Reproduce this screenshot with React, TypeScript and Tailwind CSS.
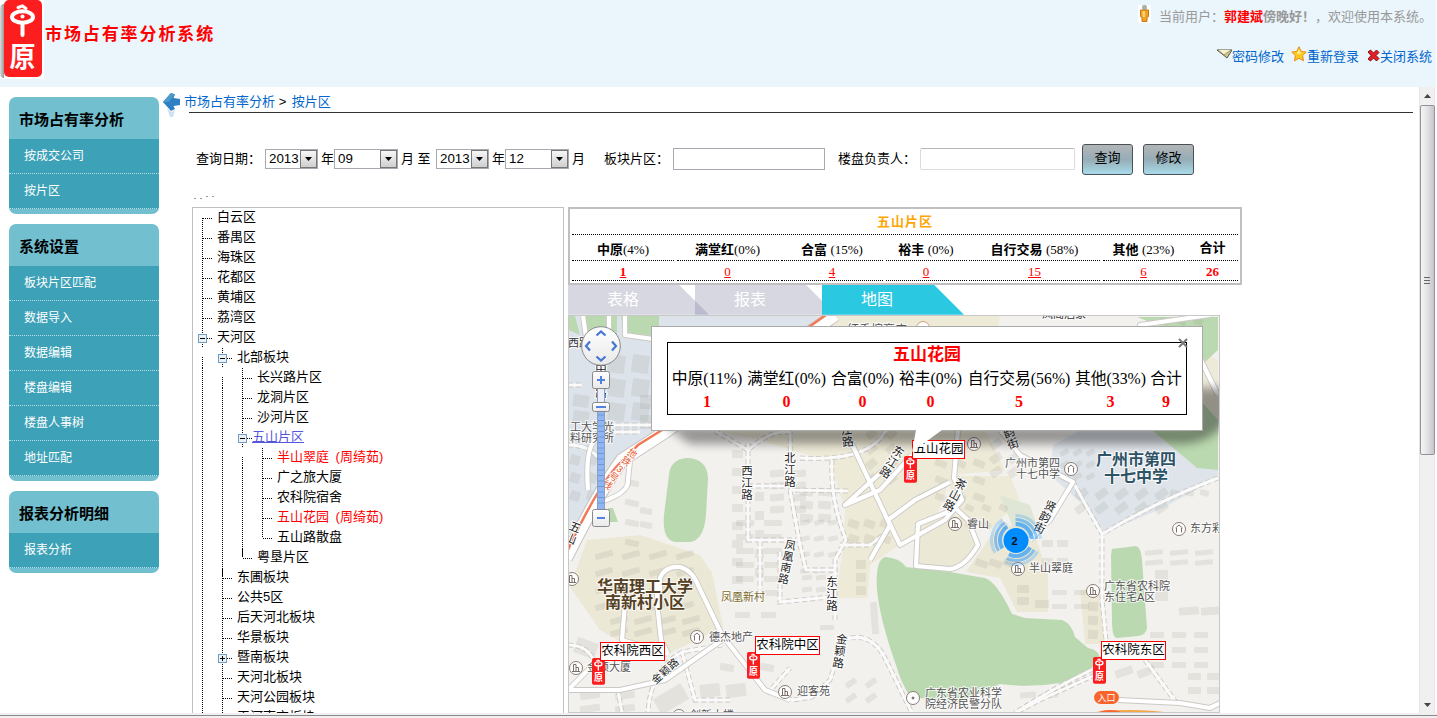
import React from 'react';

const menus = [
  { title: '市场占有率分析', items: ['按成交公司', '按片区'] },
  { title: '系统设置', items: ['板块片区匹配', '数据导入', '数据编辑', '楼盘编辑', '楼盘人事树', '地址匹配'] },
  { title: '报表分析明细', items: ['报表分析'] },
];

type Node = { t: string; l: number; box?: '-' | '+'; through?: number[]; gap?: number; top?: boolean; last?: boolean; solid?: boolean; kind?: 'red' | 'sel' };

const tree: Node[] = [
  { t: '白云区', l: 0, top: true },
  { t: '番禺区', l: 0 },
  { t: '海珠区', l: 0 },
  { t: '花都区', l: 0 },
  { t: '黄埔区', l: 0 },
  { t: '荔湾区', l: 0 },
  { t: '天河区', l: 0, box: '-' },
  { t: '北部板块', l: 1, box: '-', through: [0], gap: 0 },
  { t: '长兴路片区', l: 2, through: [0, 1], gap: 1 },
  { t: '龙洞片区', l: 2, through: [0, 1] },
  { t: '沙河片区', l: 2, through: [0, 1] },
  { t: '五山片区', l: 2, through: [0, 1], box: '-', kind: 'sel' },
  { t: '半山翠庭 (周绮茹)', l: 3, through: [0, 1, 2], gap: 2, kind: 'red' },
  { t: '广之旅大厦', l: 3, through: [0, 1, 2] },
  { t: '农科院宿舍', l: 3, through: [0, 1, 2] },
  { t: '五山花园 (周绮茹)', l: 3, through: [0, 1, 2], kind: 'red' },
  { t: '五山路散盘', l: 3, through: [0, 1, 2], last: true },
  { t: '粤垦片区', l: 2, through: [0, 1], last: true, solid: true },
  { t: '东圃板块', l: 1, through: [0], solid: true },
  { t: '公共5区', l: 1, through: [0] },
  { t: '后天河北板块', l: 1, through: [0] },
  { t: '华景板块', l: 1, through: [0] },
  { t: '暨南板块', l: 1, through: [0], box: '+' },
  { t: '天河北板块', l: 1, through: [0] },
  { t: '天河公园板块', l: 1, through: [0] },
  { t: '天河南方板块', l: 1, through: [0] },
];

function Gutter({ n }: { n: Node }) {
  const x = 9.5 + n.l * 20;
  const w = n.kind === 'sel' ? 59 : 24 + n.l * 20;
  const d = { stroke: '#000', strokeWidth: 1, strokeDasharray: '1 1' };
  return (
    <svg width={w} height="20" className="block shrink-0" shapeRendering="crispEdges">
      {(n.through || []).map((k) => (
        <line key={k} x1={9.5 + k * 20} x2={9.5 + k * 20} y1={n.gap === k ? 9 : 0} y2="20" {...d} />
      ))}
      <line x1={x} x2={x} y1={n.top ? 10 : 0} y2={n.last ? 10 : 20} {...d} />
      {n.solid && <line x1={x} x2={x} y1="0" y2="9" stroke="#000" />}
      <line x1={x} x2={x + 9} y1="10.5" y2="10.5" {...d} />
      {n.box && (
        <g>
          <rect x={x - 4} y="6.5" width="8" height="8" rx="1" fill="#eef1f4" stroke="#6f9cc4" />
          <line x1={x - 2.5} x2={x + 2.5} y1="10.5" y2="10.5" stroke="#000" />
          {n.box === '+' && <line x1={x} x2={x} y1="8" y2="13" stroke="#000" />}
        </g>
      )}
    </svg>
  );
}

function Seal({ className }: { className: string }) {
  return (
    <svg viewBox="0 0 38 78" preserveAspectRatio="none" className={className}>
      <rect x="0" y="0" width="38" height="77" rx="5" fill="#fc1d1f" />
      <ellipse cx="18.500" cy="17" rx="10.500" ry="5.800" fill="none" stroke="#fff" strokeWidth="4" />
      <path d="M14 7.500L18.500 6L22 8.500" fill="none" stroke="#fff" strokeWidth="3" strokeLinecap="round" />
      <path d="M18.500 23v12" stroke="#fff" strokeWidth="4" strokeLinecap="round" />
      <circle cx="18.500" cy="16.500" r="2" fill="#fff" />
      <text x="18.500" y="67" textAnchor="middle" fontSize="28" fontWeight="700" fill="#fff" textLength="26" lengthAdjust="spacingAndGlyphs">原</text>
    </svg>
  );
}

function Select({ v, w }: { v: string; w: string }) {
  return (
    <div className={`flex h-5 items-center justify-between border border-[#a9a9b2] bg-white pl-[3px] text-[13.333px] ${w}`}>
      <span className="leading-[18px]">{v}</span>
      <span className="flex h-[18px] w-[17px] shrink-0 items-center justify-center border border-[#777] bg-gradient-to-b from-[#f7f7f7] to-[#cfcfcf]">
        <svg width="7" height="4"><path d="M0 0h7L3.500 4z" fill="#000" /></svg>
      </span>
    </div>
  );
}

function ActionButton({ children }: { children: React.ReactNode }) {
  return (
    <button className="mt-[1px] h-[31px] w-[51px] rounded-[3px] border border-[#4b5257] bg-gradient-to-b from-[#b3b5b7] via-[#95adb6] to-[#a9dbea] pb-[3px] text-[13px]">
      {children}
    </button>
  );
}

const columns = [
  { w: 'w-[102px]', n: '中原', p: '(4%)', v: '1' },
  { w: 'w-[102px]', n: '满堂红', p: '(0%)', v: '0' },
  { w: 'w-[102px]', n: '合富', p: ' (15%)', v: '4' },
  { w: 'w-[81px]', n: '裕丰', p: ' (0%)', v: '0' },
  { w: 'w-[131px]', n: '自行交易', p: ' (58%)', v: '15' },
  { w: 'w-[82px]', n: '其他', p: ' (23%)', v: '6' },
  { w: 'w-[51px]', n: '合计', p: '', v: '26' },
];

function Summary() {
  return (
    <div className="flex h-[78px] w-[674px] flex-col border-2 border-[#c0c0c0] px-[2px] font-['Liberation_Serif','Noto_Sans_CJK_SC',serif] text-[13px]">
      <div className="flex h-[26px] items-center justify-center border-b border-dotted border-black text-[13px] font-bold tracking-[1px] text-[#ffa500]">五山片区</div>
      <div className="flex justify-between">
        {columns.map((c) => (
          <div key={c.n} className={`${c.w} text-center`}>
            <div className={`h-[26px] border-b border-dotted border-black whitespace-pre ${c.p ? 'leading-[30px]' : 'leading-[25px]'}`}>
              <b>{c.n}</b>{c.p}
            </div>
            <div className="h-5 border-b border-dotted border-black leading-[21px] text-[#f00]">
              <span className={c.v === '26' ? 'font-bold' : c.v === '1' ? 'font-bold underline' : 'underline'}>{c.v}</span>
            </div>
          </div>
        ))}
      </div>
    </div>
  );
}

function Tabs() {
  return (
    <div className="flex h-[30px] text-[16px] leading-[29px] text-white">
      <div className="w-[141px] bg-[#d7d7e1] pl-[39px] [clip-path:polygon(0_0,111px_0,141px_30px,0_30px)]">表格</div>
      <div className="relative -ml-[14px] w-[141px] bg-[#d7d7e1] pl-[39px] [clip-path:polygon(0_0,111px_0,141px_30px,0_30px)]">
        <span className="absolute bottom-0 left-0 h-[14px] w-[14px] bg-[#bbbbd0] [clip-path:polygon(0_0,100%_100%,0_100%)]" />
        报表
      </div>
      <div className="relative -ml-[14px] w-[142px] bg-[#2bc8e2] pl-[39px] [clip-path:polygon(0_0,112px_0,142px_30px,0_30px)]">地图</div>
    </div>
  );
}

// Blocks of buildings: x, y, columns, rows, step x, step y, width, height, rotation
const blocks: number[][] = [
  [732, 450, 1, 8, 0, 18, 11, 8, 2], [755, 492, 1, 5, 0, 19, 9, 9, 2], [770, 470, 2, 4, 22, 12, 14, 7, -4],
  [800, 488, 2, 3, 18, 13, 13, 8, 5], [736, 520, 2, 6, 28, 14, 18, 6, 0], [800, 520, 3, 4, 14, 16, 10, 5, -12],
  [802, 575, 2, 2, 14, 12, 10, 5, -8], [735, 612, 2, 1, 26, 10, 15, 6, 0],
  [608, 355, 2, 3, 24, 24, 17, 18, 8], [640, 395, 1, 2, 0, 20, 12, 14, 0],
  [570, 455, 2, 3, 17, 18, 10, 10, 18], [573, 395, 1, 2, 0, 16, 16, 12, 8],
  [625, 480, 1, 4, 0, 20, 14, 6, 12], [640, 508, 1, 2, 0, 14, 12, 6, 12],
  [595, 552, 4, 4, 27, 17, 18, 6, -15], [610, 617, 4, 2, 24, 12, 18, 6, -15],
  [848, 520, 3, 2, 16, 15, 11, 8, 18], [856, 560, 1, 3, 0, 13, 10, 9, 0],
  [866, 430, 2, 4, 20, 15, 11, 8, -40], [935, 460, 3, 3, 19, 17, 12, 7, 20],
  [990, 440, 2, 3, 18, 14, 12, 8, -35], [1060, 450, 3, 3, 13, 12, 9, 5, -30], [1075, 490, 5, 2, 20, 14, 13, 8, -35],
  [965, 505, 3, 2, 17, 17, 9, 6, 25], [1042, 540, 2, 2, 15, 18, 11, 7, 0], [1052, 590, 2, 2, 22, 14, 15, 5, 0], [975, 560, 3, 1, 14, 10, 13, 7, 20],
  [1017, 585, 1, 2, 22, 12, 12, 8, 0], [1035, 600, 1, 1, 0, 0, 14, 8, 0], [1088, 602, 1, 3, 0, 14, 10, 9, 3], [1145, 550, 3, 2, 25, 10, 18, 5, -5],
  [1155, 570, 1, 2, 0, 17, 13, 14, 0], [1179, 607, 2, 1, 22, 10, 20, 8, -4], [1150, 632, 3, 3, 22, 15, 14, 6, 0],
  [1115, 668, 2, 1, 22, 0, 18, 8, -20], [1188, 673, 2, 2, 19, 14, 13, 7, 0],
  [575, 640, 1, 1, 0, 0, 22, 16, 20], [580, 692, 2, 2, 35, 13, 20, 7, -8], [655, 690, 1, 1, 0, 0, 32, 18, -30],
  [700, 684, 2, 1, 26, 0, 20, 13, -6], [720, 664, 2, 1, 40, 0, 14, 7, 10], [845, 680, 2, 2, 20, 15, 12, 6, -35],
  [871, 602, 1, 1, 0, 0, 7, 32, -4], [820, 625, 1, 1, 0, 0, 14, 5, 0], [1020, 692, 2, 1, 22, 0, 16, 6, -5],
  [1170, 490, 3, 1, 15, 17, 9, 6, 15], [1160, 318, 3, 6, 17, 17, 9, 7, 20],
];

const minorRoads = [
  'M748 443V540H800', 'M790 430L791 490L848 491', 'M715 431L748 450Q770 430 790 432', 'M748 486H791',
  'M790 490L800 545L806 570H835', 'M760 541V592M780 552V602L830 597', 'M832 460Q830 500 846 540L835 560V620',
  'M800 458Q870 462 886 430', 'M1218 478Q1160 500 1102 534', 'M1073 482L1102 534V600L1107 650L1095 668Q1050 690 1015 713',
  'M1145 660L1178 705', 'M1095 675L1040 700L1015 713', 'M843 640Q870 630 885 658L912 713', 'M843 640L830 680L812 697L793 700L765 690',
  'M722 645L682 652Q650 670 648 713', 'M682 652L695 700H730', 'M568 445Q590 445 600 460', 'M568 385H582M600 425H660M600 432H640', 'M568 645Q590 645 595 665',
  'M840 545H870L890 530', 'M618 690L622 713', 'M767 694L790 668',
];
const majorRoads = [
  'M568 690L620 690L665 680L722 640', 'M568 690L590 668',
  'M625 603L622 640L668 654M657 580V603L661 640L668 654',
  'M660 590V578Q665 566 680 567Q692 570 698 585L722 635L765 690L790 700',
  'M958 430L954 478L962 500L945 520L900 545L888 520L915 500L950 482',
  'M1000 430L1020 455L1073 482L1050 520L1030 540', 'M948 512L918 524L916 566L950 569Q965 567 978 545L968 520L952 505',
  'M1118 700L1180 703L1210 708L1220 703', 'M850 440L890 525L870 560', 'M900 455L845 505L880 490L912 455', 'M1218 395L1197 352L1140 325L1210 315',
  'M595 440Q585 450 588 490M590 505Q630 495 628 480L630 460', 'M609 316V345M625 316V335L660 340', 'M583 316L588 350',
];

function Rotated({ x, y, r, s, size = 11.5, fill = '#222', vertical = true }: { x: number; y: number; r: number; s: string; size?: number; fill?: string; vertical?: boolean }) {
  return (
    <g transform={`translate(${x} ${y}) rotate(${r})`}>
      {s.split('').map((c, i) => (
        <text key={i} x={vertical ? 0 : (i - (s.length - 1) / 2) * (size + 0.5)} y={(vertical ? (i - (s.length - 1) / 2) * (size + 0.5) : 0) + size * 0.36}
          textAnchor="middle" fontSize={size} fill={fill} stroke="#fff" strokeWidth="2" paintOrder="stroke">{c}</text>
      ))}
    </g>
  );
}

const pois: [number, number, string][] = [
  [572, 579, 'b'], [576, 668, 'b'], [697, 637, 'h'], [785, 692, 'b'], [974, 444, 'b'], [1071, 469, 'h'], [955, 524, 'b'],
  [1018, 569, 'b'], [1093, 591, 'b'], [1179, 529, 'h'], [913, 698, 'd'], [923, 328, 'o'], [679, 716, 'b'],
];

const labels: [number, number, string, number, string, boolean?][] = [
  [570, 431, '工大学光', 11, '#555'], [570, 442, '料研究所', 11, '#555'], [568, 347, '西路', 11, '#333'],
  [597, 592, '华南理工大学', 16, '#554124', true], [605, 608, '南新村小区', 16, '#554124', true],
  [721, 601, '凤凰新村', 11, '#7a6a2a'], [709, 641, '德杰地产', 11, '#555'], [587, 671, '金颖大厦', 11, '#555'],
  [797, 695, '迎客苑', 11, '#555'], [690, 719, '创新大楼', 11, '#555'], [1005, 467, '广州市第四', 11, '#555'],
  [1016, 478, '十七中学', 11, '#555'], [1096, 465, '广州市第四', 16, '#2f5366', true], [1104, 482, '十七中学', 16, '#2f5366', true],
  [967, 528, '睿山', 11, '#555'], [1190, 532, '东方彩', 11, '#555'], [1029, 572, '半山翠庭', 11, '#555'],
  [1104, 590, '广东省农科院', 11, '#555'], [1104, 601, '东住宅A区', 11, '#555'],
  [925, 697, '广东省农业科学', 11, '#555'], [925, 708, '院经济民警分队', 11, '#555'],
  [847, 334, '红香槟商店', 12, '#555'], [1042, 318, '凤阁酒家', 11, '#333'],
];

function MapCanvas() {
  return (
    <svg width="650" height="397" viewBox="569 316 650 397" className="block">
      <defs>
        <filter id="soft" x="-20%" y="-40%" width="140%" height="180%"><feGaussianBlur stdDeviation="5" /></filter>
        <linearGradient id="btn" x1="0" y1="0" x2="0" y2="1"><stop offset="0" stopColor="#fff" /><stop offset="1" stopColor="#e9e9e9" /></linearGradient>
      </defs>
      <rect x="568" y="315" width="652" height="400" fill="#f3f1ee" />
      <path d="M568 315H832L660 430L620 462L568 552z" fill="#dde3eb" />
      <path d="M820 315H1000L985 430L1005 470L952 475L935 520L900 545L870 565L868 598H835L843 550L845 510L830 462L760 440L715 431L780 350z" fill="#eeead8" />
      <path d="M1160 330L1218 360V420L1150 410z" fill="#eeead8" />
      <path d="M587 540L640 535L700 555L712 573L723 627L670 653L623 643L600 630L570 587z" fill="#ece8d6" />
      <path d="M950 476H1010L1020 500L990 530L950 510z" fill="#eeead8" />
      <path d="M918 528L948 512L968 520L978 545Q965 568 950 568L918 566z" fill="#ece8d6" />
      <path d="M995 530L1030 520L1048 575V612H1017L1000 578L966 572z" fill="#ece8d6" />
      <path d="M1080 590H1100L1104 644H1085z" fill="#ece8d6" />
      <path d="M1000 495L1030 505L1040 535L1020 545z" fill="#dfe6d6" />
      <path d="M1053 445L1090 425L1153 431L1197 468L1218 470V478L1163 508L1104 533L1080 502L1050 475z" fill="#dfe4ea" />
      <path d="M569 316H575L580 335L569 330zM582 316H617V338L585 334zM621 316H659V335L624 337z" fill="#bbd9b0" />
      <path d="M669 475Q670 460 686 458Q707 458 708 478L706 515Q704 540 690 542H675Q662 540 664 515z" fill="#bbd9b0" />
      <path d="M608 508L613 508L618 522H610z" fill="#bbd9b0" />
      <path d="M885 557Q900 558 906 567L950 572L985 578Q997 582 1012 614L1025 618L1062 620Q1072 624 1075 637L1088 648Q1100 650 1100 660Q1085 676 1060 683Q1030 688 1000 684L960 702L910 697Q900 680 896 665Q880 620 877 590Q875 560 885 557z" fill="#bbd9b0" />
      <path d="M1112 549L1136 546Q1141 547 1142 560L1147 628Q1146 635 1138 636L1117 638Q1112 638 1112 620L1111 555z" fill="#bbd9b0" />
      <path d="M1137 317H1218V350L1205 362L1195 340z" fill="#bbd9b0" />
      <path d="M1153 431L1200 400L1218 420V470L1197 468z" fill="#bbd9b0" />
      {blocks.map(([x, y, c, r, dx, dy, w, h, rot], k) =>
        Array.from({ length: c * r }, (_, i) => {
          const bx = x + (i % c) * dx;
          const by = y + Math.floor(i / c) * dy;
          return <rect key={`${k}-${i}`} x={bx} y={by} width={w} height={h} rx="1" fill="#8c8c82" opacity="0.15" transform={`rotate(${rot} ${bx + w / 2} ${by + h / 2})`} />;
        }),
      )}
      {minorRoads.map((d) => <path key={d} d={d} fill="none" stroke="#c9c7c3" strokeWidth="4.800" strokeDasharray="5 3" />)}
      {minorRoads.map((d) => <path key={d} d={d} fill="none" stroke="#fafafa" strokeWidth="3" />)}
      {majorRoads.map((d) => <path key={d} d={d} fill="none" stroke="#cbc9c5" strokeWidth="6" strokeLinejoin="round" />)}
      {majorRoads.map((d) => <path key={d} d={d} fill="none" stroke="#fff" strokeWidth="4.200" strokeLinejoin="round" />)}
      <path d="M566 558Q600 490 622 460L665 432L835 315" fill="none" stroke="#c6c4c1" strokeWidth="14" />
      <path d="M566 558Q600 490 622 460L665 432L835 315" fill="none" stroke="#fff" strokeWidth="12" />
      <path d="M565 556Q597 487 618 465L638 445L662 430L826 315" fill="none" stroke="#f07a58" strokeWidth="2.500" />

      <ellipse cx="1130" cy="722" rx="62" ry="12" fill="#f3a648" />
      <ellipse cx="1110" cy="714" rx="13" ry="4" fill="#f9642d" />

      {pois.map(([x, y, kind]) => (
        <g key={`${x}-${y}`} fill="none" stroke="#7d6f68">
          <circle cx={x} cy={y} r="6.500" fill="#fff" stroke={kind === 'o' ? '#d99a70' : '#8a7c75'} />
          {kind === 'b' && <path d="M-4 3.500H4M-2.500 3V-3.500H0V3M2.500 3V-.5H0" transform={`translate(${x} ${y})`} />}
          {kind === 'h' && <path d="M-3.500 -1L0 -4L3.500 -1M-2.500 -1V3.500M2.500 -1V3.500" transform={`translate(${x} ${y})`} />}
          {kind === 'd' && <circle cx={x} cy={y} r="1" fill="#666" />}
        </g>
      ))}
      {labels.map(([x, y, s, size, fill, bold]) => (
        <text key={`${x}-${y}`} x={x} y={y} fontSize={size} fill={fill} fontWeight={bold ? 700 : 400} stroke="#fff" strokeWidth="2" strokeOpacity="0.8" paintOrder="stroke">{s}</text>
      ))}
      <Rotated x={747} y={483} r={0} s="西江路" />
      <Rotated x={790} y={470} r={0} s="北江路" />
      <Rotated x={847} y={436} r={-8} s="江路" />
      <Rotated x={892} y={462} r={32} s="东江路" />
      <Rotated x={955} y={495} r={28} s="茶山路" />
      <Rotated x={1045} y={517} r={26} s="贤韵街" />
      <Rotated x={1011} y={438} r={-20} s="韵街" />
      <Rotated x={787} y={562} r={11} s="凤凰南路" size={11} />
      <Rotated x={832} y={594} r={0} s="东江路" />
      <Rotated x={840} y={651} r={8} s="金颖路" />
      <Rotated x={665} y={671} r={-42} s="金颖路" vertical={false} size={10.5} />
      <Rotated x={601} y={381} r={0} s="中山路" />
      <Rotated x={573} y={533} r={22} s="五山" />
      <Rotated x={620} y={469} r={38} s="地铁3号线" size={9.5} fill="#e8582e" />

      <g fill="none" stroke="#0a8cff" strokeDasharray="26.200 9.400" strokeDashoffset="-4">
        <circle cx="1016" cy="540" r="16" strokeWidth="4" strokeOpacity="0.6" pathLength="106.800" transform="rotate(15 1016 540)" />
        <circle cx="1016" cy="540" r="20.500" strokeWidth="3" strokeOpacity="0.45" pathLength="106.800" transform="rotate(15 1016 540)" />
        <circle cx="1016" cy="540" r="24.500" strokeWidth="3" strokeOpacity="0.22" pathLength="106.800" transform="rotate(15 1016 540)" />
      </g>
      <circle cx="1016" cy="540.500" r="12.500" fill="#008cff" />
      <text x="1014.500" y="544.500" textAnchor="middle" fontSize="11" fontWeight="700" fill="#111">2</text>
      <rect x="1094" y="691" width="25" height="13" rx="6.500" fill="#f9642d" />
      <text x="1106.500" y="701" textAnchor="middle" fontSize="9" fill="#fff">入口</text>

      <rect x="597.500" y="388" width="7" height="122" fill="#e9eef8" stroke="#8fa0bb" />
      <rect x="598" y="410" width="6" height="100" fill="#8fb6f2" />
      {Array.from({ length: 17 }, (_, i) => <path key={i} d={`M598 ${415 + i * 5.5}h6`} stroke="#6f97d8" />)}
      <g fill="url(#btn)" stroke="#888">
        <circle cx="601" cy="346" r="19.300" />
        <rect x="592.500" y="371.500" width="17" height="17" rx="2" />
        <rect x="592.500" y="402.500" width="17" height="9" rx="2" />
        <rect x="592.500" y="509.500" width="17" height="17" rx="2" />
      </g>
      <path d="M596.500 335.500L601 331.500L605.500 335.500M596.500 356.500L601 360.500L605.500 356.500M590 341.500L586 346L590 350.500M612 341.500L616 346L612 350.500" fill="none" stroke="#4477d2" strokeWidth="2.200" />
      <path d="M597 380h8M601 376v8M596 407h10M597 518h8" stroke="#4f83df" strokeWidth="2" />

      <path d="M665 426L690 444H1185Q1215 442 1230 415L1240 388H1195V426z" fill="#000" opacity="0.38" filter="url(#soft)" />
    </svg>
  );
}

const pins = [
  { t: '五山花园', label: 'left-[343px] top-[124px] w-[53px]', pin: 'left-[335px] top-[140px]' },
  { t: '农科院西区', label: 'left-[31px] top-[326px] w-[65px]', pin: 'left-[23px] top-[342px]' },
  { t: '农科院中区', label: 'left-[186px] top-[320px] w-[65px]', pin: 'left-[178px] top-[336px]' },
  { t: '农科院东区', label: 'left-[532px] top-[325px] w-[65px]', pin: 'left-[524px] top-[341px]' },
];

const popupCols = [
  { w: 'w-[72px]', h: '中原(11%)', v: '1' },
  { w: 'w-[83px]', h: '满堂红(0%)', v: '0' },
  { w: 'w-[65px]', h: '合富(0%)', v: '0' },
  { w: 'w-[67px]', h: '裕丰(0%)', v: '0' },
  { w: 'w-[106px]', h: '自行交易(56%)', v: '5' },
  { w: 'w-[73px]', h: '其他(33%)', v: '3' },
  { w: 'w-[34px]', h: '合计', v: '9' },
];

function MapPanel() {
  return (
    <div className="relative h-[399px] w-[652px] overflow-hidden border border-[#c8c8c8]">
      <MapCanvas />
      {pins.map((p) => (
        <React.Fragment key={p.t}>
          <Seal className={`absolute h-[27px] w-[13px] ${p.pin}`} />
          <div className={`absolute h-[19px] border border-[#f00] bg-white text-center text-[12.500px] leading-[16px] whitespace-nowrap ${p.label}`}>{p.t}</div>
        </React.Fragment>
      ))}
      <div className="absolute top-[10px] left-[82px] h-[105px] w-[552px] border border-[#aaa] bg-white p-[15px] font-['Liberation_Serif','Noto_Sans_CJK_SC',serif]">
        <div className="h-[73px] w-[520px] border border-black px-[3px] text-[16px]">
          <div className="h-[24px] text-center text-[17px] leading-[24px] font-bold text-[#f00]">五山花园</div>
          <div className="flex justify-between">
            {popupCols.map((c) => (
              <div key={c.h} className={`flex flex-col items-center whitespace-nowrap ${c.w}`}>
                <span className="h-[24px] text-[15.800px] leading-[23px]">{c.h}</span>
                <span className="leading-[22px] font-bold text-[#f00]">{c.v}</span>
              </div>
            ))}
          </div>
        </div>
        <svg className="absolute top-[11px] right-[14px]" width="10" height="10"><path d="M1 1L9 9M9 1L1 9" stroke="#777" strokeWidth="2" /></svg>
        <svg className="absolute top-[103px] left-[259px]" width="34" height="24"><path d="M5 0H31L1 22z" fill="#fff" /></svg>
      </div>
    </div>
  );
}

export default function App() {
  return (
    <div className="flex h-[718px] w-[1437px] flex-col overflow-hidden bg-white font-['Liberation_Sans','Noto_Sans_CJK_SC',sans-serif] text-[13px] text-black">
      <header className="mr-[1px] flex h-[87px] shrink-0 justify-between bg-[#eaf5fc]">
        <div className="flex">
          <div className="flex h-[79px] w-[44px] bg-white">
            <span className="mt-1 h-[74px] w-[4px] shrink-0 rounded-l-md bg-gradient-to-r from-[#ddd] to-[#999]" />
            <Seal className="h-[78px] w-[38px] shrink-0" />
          </div>
          <h1 className="ml-[1px] pt-[23px] text-[17px] leading-6 font-bold tracking-[1.900px] text-[#f00]">市场占有率分析系统</h1>
        </div>
        <div className="flex flex-col items-end pr-[4px] whitespace-nowrap">
          <div className="mt-[5px] flex h-6 items-center text-[#999]">
            <svg width="13" height="18" viewBox="0 0 13 18" className="mr-[8px] mb-[6px] shrink-0">
              <rect width="13" height="18" fill="#fff" />
              <rect x="4" y="0" width="5" height="5" rx="2" fill="#a9b3ac" />
              <path d="M2.500 5h8v6.500l-1.500 1v4H4v-4l-1.500-1z" fill="#f2a01e" stroke="#c37a14" />
              <path d="M4.500 6h2.500v6H4.500z" fill="#ffd27a" />
            </svg>
            <span>当前用户：</span>
            <span className="font-bold text-[#f00]">郭建斌</span>
            <b>傍晚好！</b>
            <span>，欢迎使用本系统。</span>
          </div>
          <div className="mt-[16px] flex h-6 items-center text-[#0066cc]">
            <svg width="15" height="11" className="mb-[6px]"><path d="M0 1H15L10 9L7 6.500z" fill="#cfca86" stroke="#55554a" /><path d="M1 1L7 6L14 1" fill="#f5f2c8" stroke="#77735a" strokeWidth=".7" /></svg>
            <span className="mr-[7px]">密码修改</span>
            <svg width="16" height="16" viewBox="0 0 16 16" className="mb-[6px]"><path d="M8 .7l2.200 4.700 5 .7-3.600 3.500.9 5.200L8 12.300l-4.500 2.500.9-5.200L.8 6.100l5-.7z" fill="#ffc81e" stroke="#e0901c" /><path d="M8 3l1.300 3.500 3 .5-6.500 1z" fill="#fff09a" /></svg>
            <span className="mr-[8px]">重新登录</span>
            <svg width="13" height="13" viewBox="0 0 13 13" className="mb-[3px]"><path d="M1 3L3.500 1L6.500 4L9.500 1L12 3.500L9 6.500L12 9.500L9.500 12L6.500 9L3.500 12L1 10L4 6.500z" fill="#e01f26" stroke="#8e1014" /></svg>
            <span>关闭系统</span>
          </div>
        </div>
      </header>

      <div className="flex min-h-0 flex-1 overflow-hidden">
        <aside className="flex w-[162px] shrink-0 flex-col gap-[10px] pt-[10px] pl-[9px]">
          {menus.map((m) => (
            <section key={m.title} className="w-[150px] overflow-hidden rounded-[7px] bg-[#71bfcf] pb-[5px]">
              <h2 className="h-[42px] pl-[10px] text-[15px] leading-[45px] font-bold">{m.title}</h2>
              {m.items.map((i) => (
                <div key={i} className="h-[35px] border-b border-dotted border-[#b9dde6] bg-[#3da1b7] pl-[15px] text-[12px] leading-[34px] text-white">{i}</div>
              ))}
            </section>
          ))}
        </aside>

        <main className="flex w-[1257px] shrink-0 flex-col">
          <div className="flex h-[26px] w-[1251px]">
            <svg width="19" height="28" viewBox="0 0 19 28" className="mt-[3px] shrink-0">
              <path d="M1 12L9 3L13 4.500L11.500 8L18 9V15L11.500 16L13 19L9 21z" fill="#2f7fc4" />
              <path d="M1 12L9 3L13 4.500L6.500 12z" fill="#4a9bc9" />
              <path d="M5 18L9 22L13 20L11 27H8z" fill="#cfe0f4" />
            </svg>
            <div className="-mr-[2px] flex-1 pl-[3px] leading-[30px] text-[#0066cc]">市场占有率分析 <span className="mr-[2px] text-black">&gt;</span> 按片区</div>
          </div>
          <div className="-mt-[1px] ml-[27px] h-[1px] w-[1224px] shrink-0 bg-[#333]" />
          <div className="mt-[30px] ml-[34px] flex h-[32px] shrink-0 items-center whitespace-nowrap">
            <span className="w-[69px]">查询日期：</span>
            <Select v="2013" w="w-[53px]" />
            <span className="w-[16px] pl-[3px]">年</span>
            <Select v="09" w="w-[64px]" />
            <span className="w-[38px] pl-[3px]">月 至</span>
            <Select v="2013" w="w-[53px]" />
            <span className="w-[16px] pl-[3px]">年</span>
            <Select v="12" w="w-[64px]" />
            <span className="w-[35px] pl-[3px]">月</span>
            <span className="w-[69px]">板块片区：</span>
            <input className="h-[22px] w-[152px] border border-[#a9a9b2] bg-white" />
            <span className="ml-[13px] w-[82px]">楼盘负责人：</span>
            <input className="mr-[7px] h-[22px] w-[155px] rounded-[2px] border border-[#dcdce0] border-t-[#b5b5bb] bg-white" />
            <ActionButton>查询</ActionButton>
            <span className="w-[10px]" />
            <ActionButton>修改</ActionButton>
          </div>
          <div className="ml-[32px] flex h-[32px] shrink-0 items-start gap-[4px] pt-[21px]">
            <i className="mt-[2px] h-px w-[2px] bg-[#999]" />
            <i className="mt-[2px] h-px w-[2px] bg-[#999]" />
            <i className="h-px w-[2px] bg-[#999]" />
            <i className="h-px w-[2px] bg-[#999]" />
          </div>
          <div className="ml-[30px] flex min-h-0 flex-1 gap-[4px] overflow-hidden">
            <div className="h-[540px] w-[372px] shrink-0 border border-[#c0c0c0]">
              {tree.map((n) => (
                <div key={n.t} className="flex h-5 items-start whitespace-nowrap">
                  <Gutter n={n} />
                  <span className={n.kind === 'sel' ? 'leading-[17px] text-[#5555dd] underline' : n.kind === 'red' ? 'leading-[18px] [word-spacing:3px] text-[#f00]' : 'leading-[17px]'}>{n.t}</span>
                </div>
              ))}
            </div>
            <div className="flex shrink-0 flex-col">
              <Summary />
              <Tabs />
              <MapPanel />
            </div>
          </div>
        </main>

        <div className="flex w-[16px] shrink-0 flex-col items-center border-x border-[#e6e6e6] bg-[#f0f0f0]">
          <svg width="7" height="4" className="mt-[7px] mb-[7px] shrink-0"><path d="M0 4L3.500 0L7 4z" fill="#444" /></svg>
          <div className="flex h-[350px] w-[15px] shrink-0 flex-col items-center justify-center gap-[2px] rounded-[2px] border border-[#949498] bg-gradient-to-r from-[#f6f6f6] via-[#e2e2e4] to-[#c4c4ca]">
            <i className="h-px w-[6px] bg-[#666]" />
            <i className="h-px w-[6px] bg-[#666]" />
            <i className="h-px w-[6px] bg-[#666]" />
          </div>
          <svg width="7" height="4" className="mt-auto mb-[6px] shrink-0"><path d="M0 0L3.500 4L7 0z" fill="#444" /></svg>
        </div>
      </div>
      <footer className="h-[5px] shrink-0 border-t border-[#f0f0f0] bg-[#f0f0f0]">
        <div className="mt-[1px] h-px bg-[#8a8a8a]" />
      </footer>
    </div>
  );
}
